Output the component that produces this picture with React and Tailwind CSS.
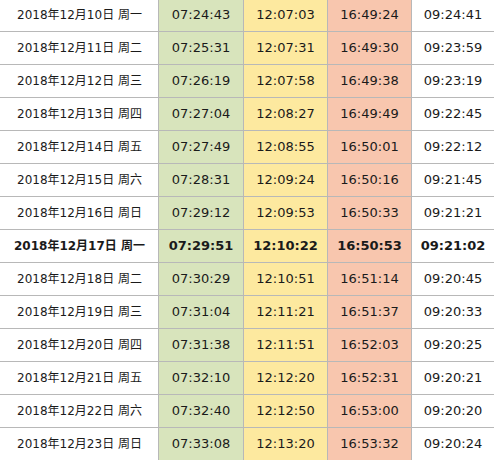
import React from "react";

const rows = [
  ["2018年12月10日 周一", "07:24:43", "12:07:03", "16:49:24", "09:24:41"],
  ["2018年12月11日 周二", "07:25:31", "12:07:31", "16:49:30", "09:23:59"],
  ["2018年12月12日 周三", "07:26:19", "12:07:58", "16:49:38", "09:23:19"],
  ["2018年12月13日 周四", "07:27:04", "12:08:27", "16:49:49", "09:22:45"],
  ["2018年12月14日 周五", "07:27:49", "12:08:55", "16:50:01", "09:22:12"],
  ["2018年12月15日 周六", "07:28:31", "12:09:24", "16:50:16", "09:21:45"],
  ["2018年12月16日 周日", "07:29:12", "12:09:53", "16:50:33", "09:21:21"],
  ["2018年12月17日 周一", "07:29:51", "12:10:22", "16:50:53", "09:21:02"],
  ["2018年12月18日 周二", "07:30:29", "12:10:51", "16:51:14", "09:20:45"],
  ["2018年12月19日 周三", "07:31:04", "12:11:21", "16:51:37", "09:20:33"],
  ["2018年12月20日 周四", "07:31:38", "12:11:51", "16:52:03", "09:20:25"],
  ["2018年12月21日 周五", "07:32:10", "12:12:20", "16:52:31", "09:20:21"],
  ["2018年12月22日 周六", "07:32:40", "12:12:50", "16:53:00", "09:20:20"],
  ["2018年12月23日 周日", "07:33:08", "12:13:20", "16:53:32", "09:20:24"],
];

const cellBg = ["bg-white", "bg-[#d8e4bc]", "bg-[#fde99f]", "bg-[#f8c6ae]", "bg-white"];

export default function App() {
  return (
    <div className="w-[494px] h-[460px] overflow-hidden bg-white">
      <div
        className="-mt-px grid grid-cols-[159px_85px_84px_84px_82px] text-[13px] text-[#1a1a1a]"
        style={{ fontFamily: '"DejaVu Sans", "Noto Sans CJK SC", sans-serif' }}
      >
        {rows.map((r, i) =>
          r.map((c, j) => (
            <div
              key={i + "-" + j}
              className={
                "h-[33px] flex items-center justify-center border-b border-[#b8b8b8] " +
                (j < 4 ? "border-r " : "") +
                (j === 0 ? "text-[12px] pl-px " : "") +
                cellBg[j] +
                (i === 7 ? " font-bold" : "")
              }
            >
              {c}
            </div>
          ))
        )}
      </div>
    </div>
  );
}
